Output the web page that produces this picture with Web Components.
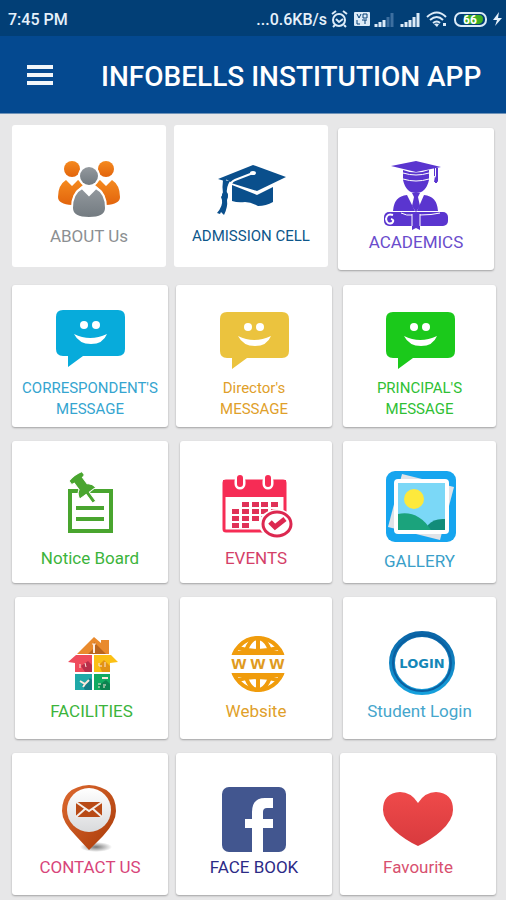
<!DOCTYPE html>
<html lang="en">
<head>
<meta charset="utf-8">
<meta name="viewport" content="width=device-width, initial-scale=1">
<title>Infobells Institution App</title>
<style>
    body {
        margin: 0;
        background: #e7e7e8;
        font-family: Roboto, "Liberation Sans", sans-serif;
    }
</style>
</head>
<body>
<institution-app></institution-app>

<script>
// message bubble, shared by three cards
const bubble = (color, top) => `
    <g transform="translate(0 ${top})">
        <path fill="${color}" d="M13 0h55q7 0 7 7v32q0 7-7 7H33L18 57V46h-5q-7 0-7-7V7q0-7 7-7z"/>
        <circle cx="34" cy="15" r="4" fill="#fff"/>
        <circle cx="46" cy="15" r="4" fill="#fff"/>
        <path fill="#fff" d="M24 24q16 8 33 0q-4 10-16 10T24 24z"/>
    </g>`;

const calendarCells = () => {
    let d = '';
    [26, 33, 40, 47].forEach((y, row) => {
        [16, 26, 36, 45, 55].forEach((x, col) => {
            if (row === 0 && col === 0) return;
            if (row === 3 && col > 1) return;
            d += `M${x} ${y}h7v5h-7z`;
        });
    });
    return d;
};

// every icon is drawn on an 80 x 72 canvas
const ICONS = {
    about: `
        <defs>
            <linearGradient id="o" x2="0" y2="1"><stop stop-color="#f58a1f"/><stop offset="1" stop-color="#e2640c"/></linearGradient>
            <linearGradient id="g" x2="0" y2="1"><stop stop-color="#93999e"/><stop offset="1" stop-color="#727a80"/></linearGradient>
        </defs>
        <g fill="url(#o)">
            <circle cx="23" cy="15" r="8"/>
            <circle cx="57" cy="15" r="8"/>
            <path d="M17 26l6 6 6-6q3 1 5 5l-7 6q-4 7-4 14-14-1-14-8 0-12 8-17z"/>
            <path d="M63 26l-6 6-6-6q-3 1-5 5l7 6q4 7 4 14 14-1 14-8 0-12-8-17z"/>
        </g>
        <circle cx="40" cy="22" r="11" fill="#fff"/>
        <circle cx="40" cy="22" r="9" fill="url(#g)"/>
        <path fill="url(#g)" stroke="#fff" stroke-width="2" d="M33 34l7 7 7-7q10 5 10 20 0 10-17 10T23 54q0-15 10-20z"/>`,
    admission: `
        <g fill="#0a4f8c">
            <path d="M7 25L42 11l33 12-29 14z"/>
            <path d="M21 31l25 10 16-8v15q-7 4-15 4-7-4-13-4-7 1-13-1z"/>
        </g>
        <path fill="none" stroke="#fff" stroke-width="6" d="M18 27q-4 7-3 13"/>
        <path fill="none" stroke="#fff" stroke-width="2" d="M42 19L24 26q-5 2-5 8"/>
        <ellipse cx="42" cy="19" rx="3" ry="2" fill="#fff"/>
        <g fill="#0a4f8c">
            <path d="M12 26l7 1q-4 6-3 13l1 3-1 3q1 7-3 15l-3-3-1 2-3-1q6-7 5-13l-1-3 2-3q-1-8 0-14z"/>
            <circle cx="14" cy="41" r="3"/>
        </g>`,
    academics: `
        <g fill="#5a35cf">
            <path d="M15 6l25-5 25 6-25 5z"/>
            <path d="M27 10q13 5 26 0v10q-3 13-13 13T27 20z"/>
            <path d="M58 8h1v8l3 6h-4l1-6h-1z"/>
            <path d="M17 51q1-15 14-16l8 16zM62 51q-1-15-14-16l-7 16z"/>
            <path d="M36 33h8l-2 4 2 9-4 6-4-6 2-9z"/>
            <rect x="8" y="52" width="64" height="14" rx="5"/>
            <path d="M36 62h8v8l-4-2-4 2z"/>
        </g>
        <g fill="none" stroke="#fff">
            <path d="M27 13q13 4 26 0M27 19q13 4 26 0M25 53q6 3 11 2M44 55q12 0 20-2M36 54v12M44 54v12"/>
            <path stroke-width="2" d="M17 55q-6-2-7 4 1 6 6 4 3-3-1-4"/>
        </g>
        <path stroke="#5a35cf" stroke-width="2" d="M61 8v13M60 18v5"/>`,
    correspondent: bubble('#07abdb', 4),
    director: bubble('#ebc33e', 6),
    principal: bubble('#1bc91b', 6),
    notice: `
        <rect x="20" y="15" width="41" height="40" fill="none" stroke="#49a52f" stroke-width="4"/>
        <path stroke="#49a52f" stroke-width="4" d="M26 32h28M26 43h28"/>
        <path transform="translate(26 1) rotate(-36)" fill="#49a52f" stroke="#fff" d="M-8-1q8-2 16 0v4q-1 1-3 1v8q4 2 5 8H2v11h-4V20h-8q1-6 5-8V4q-2 0-3-1z"/>`,
    events: `
        <rect x="8" y="5" width="61" height="50" rx="2" fill="#fff" stroke="#f62c55" stroke-width="3"/>
        <path fill="#f62c55" d="M7 4h63v17H7z"/>
        <path fill="#e03157" d="${calendarCells()}"/>
        <g stroke-linecap="round">
            <path stroke="#fff" stroke-width="11" d="M24 5v3M52 5v3"/>
            <path stroke="#f62c55" stroke-width="6" d="M24 2v6M52 2v6"/>
        </g>
        <ellipse cx="61" cy="48" rx="18" ry="15" fill="#fff"/>
        <ellipse cx="61" cy="48" rx="14" ry="12" fill="#fff" stroke="#dc2850" stroke-width="3"/>
        <path fill="none" stroke="#dc2850" stroke-width="5" d="M54 46l5 5 10-8"/>`,
    gallery: `
        <rect x="6" y="-8" width="70" height="71" rx="9" fill="#16a5ef"/>
        <path fill="#dfe3e8" d="M22-5L74 8 60 61 8 48z"/>
        <rect x="14" y="0" width="55" height="55" rx="4" fill="#fff"/>
        <path fill="#7bd8f7" d="M18 4h47v47H18z"/>
        <circle cx="34" cy="20" r="10" fill="#fde93c"/>
        <path fill="#128c79" d="M48 46q6-7 17-6v11H48z"/>
        <path fill="#1ba37c" d="M18 35q20-4 33 16H18z"/>`,
    facilities: `
        <path fill="#e98a2d" d="M42 8l7 6v-3h8v14H25z"/>
        <path fill="#b9651f" d="M42 13l12 12H36l5-5z"/>
        <path fill="#ef4b5c" d="M24 26h16v17H23v-9l-7-1z"/>
        <path fill="#fbc015" d="M42 26h17l7 7-8 1v9H42z"/>
        <path fill="#1fa9a8" d="M23 45h17v16H23z"/>
        <path fill="#12ab62" d="M42 45h16v16H42z"/>
        <path fill="#b92f4a" d="M29 37l7-5 4 4v7h-7z"/>
        <path fill="#e39314" d="M47 36l5-5 6 6v6h-8z"/>
        <path fill="#137f86" d="M30 56l8-7 2 2v10h-7z"/>
        <path fill="#0b8350" d="M46 57l8-6 4 4v6h-9z"/>
        <g stroke="#fbe9dc" fill="none">
            <path stroke-width="2" d="M42 15v9M28 52l5 3 4-4M33 55l-2 3M50 49h6"/>
            <path d="M40 15h4M28 35v4M33 34l1 4M47 34v3h3M53 33v5M46 55h3M46 58h2M51 56h3M51 58h2"/>
        </g>`,
    website: `
        <clipPath id="c"><path d="M10 0h64v26H10zM10 44h64v25H10z"/></clipPath>
        <g clip-path="url(#c)" fill="none" stroke="#f09c0c" stroke-width="4">
            <circle cx="42" cy="35" r="26"/>
            <ellipse cx="42" cy="35" rx="14" ry="26"/>
            <path d="M42 8v54M18 24h48M18 46h48M22 19q20 6 40 0M22 51q20-6 40 0"/>
        </g>
        <g fill="#e09a20" font-family="Liberation Sans, sans-serif" font-size="19" font-weight="700" text-anchor="middle">
            <text x="23" y="40">w</text><text x="42" y="40">w</text><text x="61" y="40">w</text>
        </g>`,
    login: `
        <defs><linearGradient id="l" x2="0" y2="1"><stop stop-color="#0a66a8"/><stop offset="1" stop-color="#16a0dc"/></linearGradient></defs>
        <ellipse cx="42" cy="34" rx="30" ry="29" fill="#fff" stroke="url(#l)" stroke-width="6"/>
        <ellipse cx="42" cy="34" rx="29" ry="28" fill="none" stroke="#0b5fa0" stroke-width="2"/>
        <text x="42" y="39" fill="#1487b8" font-family="DejaVu Sans, sans-serif" font-size="13" font-weight="700" text-anchor="middle">LOGIN</text>`,
    contact: `
        <defs>
            <linearGradient id="p" x2="1" y2="1"><stop stop-color="#dd6a30"/><stop offset="1" stop-color="#a93a08"/></linearGradient>
            <linearGradient id="w" x2="0" y2="1"><stop stop-color="#fff"/><stop offset="1" stop-color="#d9dadc"/></linearGradient>
            <radialGradient id="s"><stop stop-color="#777"/><stop offset="1" stop-color="#777" stop-opacity="0"/></radialGradient>
        </defs>
        <ellipse cx="46" cy="62" rx="16" ry="5" fill="url(#s)"/>
        <path fill="url(#p)" d="M39 0q27 2 27 26 0 11-13 25L39 65 26 51Q12 37 12 26 12 2 39 0z"/>
        <circle cx="39" cy="25" r="22" fill="url(#w)"/>
        <path fill="#b84a16" d="M26 17h26v15H26z"/>
        <path fill="none" stroke="#f3eeea" stroke-width="2" d="M26 17l13 9 13-9M26 32l9-8M52 32l-9-8"/>`,
    facebook: `
        <rect x="8" y="2" width="64" height="65" rx="7" fill="#42568f"/>
        <path fill="#fff" d="M38 67V43h-7v-9h7v-7q0-14 13-14h8v10h-6q-4 0-4 4v7h10v9H49v24z"/>`,
    favourite: `
        <defs><linearGradient id="h" x2="0" y2="1"><stop stop-color="#ef4a4a"/><stop offset="1" stop-color="#d83a3e"/></linearGradient></defs>
        <path fill="url(#h)" d="M40 18Q33 7 22 7 5 8 5 25q0 10 12 21 10 9 23 15 13-6 23-15 12-11 12-21Q75 8 58 7 47 7 40 18z"/>`
};

class MenuIcon extends HTMLElement {
    constructor() {
        super();
        this.attachShadow({ mode: 'open' });
    }

    connectedCallback() {
        this.shadowRoot.innerHTML = `
            <style>
                :host { display: block; }
                svg { display: block; width: 80px; height: 72px; overflow: visible; }
            </style>
            <svg viewBox="0 0 80 72" aria-hidden="true">${ICONS[this.getAttribute('name')] || ''}</svg>
        `;
    }
}

class MenuCard extends HTMLElement {
    constructor() {
        super();
        this.attachShadow({ mode: 'open' });
    }

    connectedCallback() {
        this.shadowRoot.innerHTML = `
            <style>
                :host { display: block; min-width: 0; }
                a {
                    display: flex;
                    flex-direction: column;
                    align-items: center;
                    justify-content: flex-end;
                    box-sizing: border-box;
                    height: 142px;
                    padding-bottom: var(--foot, 17px);
                    border-radius: 3px;
                    background: #fff;
                    box-shadow: 0 1px 2px rgba(0, 0, 0, 0.3);
                    color: var(--ink, #333);
                    font-size: 17px;
                    line-height: 21px;
                    text-align: center;
                    text-decoration: none;
                }
                :host([small]) a { font-size: 15px; }
                :host([flat]) a { box-shadow: none; }
            </style>
            <a href="#${this.getAttribute('icon')}">
                <menu-icon name="${this.getAttribute('icon')}"></menu-icon>
                <span><slot></slot></span>
            </a>
        `;
    }
}

class CardRow extends HTMLElement {
    constructor() {
        super();
        this.attachShadow({ mode: 'open' });
    }

    connectedCallback() {
        this.shadowRoot.innerHTML = `
            <style>
                :host {
                    display: grid;
                    grid-template-columns: ${this.getAttribute('columns')};
                }
                ::slotted(:nth-child(1)) { grid-column: 1; }
                ::slotted(:nth-child(2)) { grid-column: 3; }
                ::slotted(:nth-child(3)) { grid-column: 5; }
            </style>
            <slot></slot>
        `;
    }
}

class StatusBar extends HTMLElement {
    constructor() {
        super();
        this.attachShadow({ mode: 'open' });
    }

    connectedCallback() {
        this.shadowRoot.innerHTML = `
            <style>
                :host {
                    display: flex;
                    align-items: center;
                    justify-content: space-between;
                    height: 36px;
                    padding: 2px 4px 0 8px;
                    box-sizing: border-box;
                    background: #023f76;
                    color: #e6f1fb;
                    font-size: 16px;
                    font-weight: 500;
                }
                .right { display: flex; align-items: center; gap: 6px; }
                .speed { display: flex; align-items: center; gap: 4px; }
                svg { display: block; fill: none; stroke: #dcebf8; }
            </style>
            <span>7:45 PM</span>
            <div class="right">
                <div class="speed">
                    <span>...0.6KB/s</span>
                    <svg width="17" height="18" stroke-width="2">
                        <circle cx="8" cy="10" r="6"/><path d="M1 4l4-3M16 4l-4-3M5 9l3 3 4-3M4 15l-2 2M13 15l2 2"/>
                    </svg>
                </div>
                <div class="speed">
                    <svg width="16" height="14">
                        <rect width="16" height="14" rx="1" fill="#dcebf8" stroke="none"/>
                        <path stroke="#023f76" d="M3 2l2 4 2-4M9 2h4v4H9zM3 8v4h3M8 8h5M11 8v4"/>
                    </svg>
                    <svg width="20" height="15" stroke-width="3">
                        <path d="M2 15v-3M6 15v-5M10 15V8"/><path stroke="#3d6f9f" d="M14 15V5M18 15V1"/>
                    </svg>
                </div>
                <svg width="20" height="15" stroke-width="3"><path d="M2 15v-3M6 15v-5M10 15V8M14 15V5M18 15V1"/></svg>
                <svg width="22" height="16" stroke-width="2">
                    <path d="M1 6q10-9 19 0M4 9q7-6 13 0M7 12q4-3 7 0"/>
                    <path fill="#dcebf8" stroke="none" d="M8 13q2-1 5 0l-2 3zM17 12h3v3h-3z"/>
                </svg>
                <svg width="33" height="15" stroke-width="2">
                    <rect x="1" y="1" width="31" height="13" rx="6"/>
                    <path fill="#3faf21" stroke="none" d="M10 3h15q4 0 4 4t-4 5H10z"/>
                    <text x="16" y="12" fill="#fff" stroke="none" font-size="12" font-weight="700" text-anchor="middle">66</text>
                </svg>
                <svg width="9" height="14"><path fill="#e6f1fb" stroke="none" d="M6 0L0 8h4l-2 6 7-8H5z"/></svg>
            </div>
        `;
    }
}

class AppBar extends HTMLElement {
    constructor() {
        super();
        this.attachShadow({ mode: 'open' });
    }

    connectedCallback() {
        this.shadowRoot.innerHTML = `
            <style>
                :host {
                    display: flex;
                    align-items: center;
                    gap: 44px;
                    height: 78px;
                    padding: 0 16px 0 23px;
                    box-sizing: border-box;
                    background: #044990;
                    border-bottom: 1px solid #6f93b8;
                    color: #fff;
                }
                button {
                    display: block;
                    padding: 4px;
                    border: 0;
                    background: none;
                }
                svg { display: block; }
                h1 {
                    margin: 0;
                    padding-top: 4px;
                    font-size: 28px;
                    font-weight: 500;
                    line-height: 32px;
                    white-space: nowrap;
                }
            </style>
            <button type="button" aria-label="Menu">
                <svg width="26" height="20"><path stroke="#f1f6fb" stroke-width="4" d="M0 2h26M0 10h26M0 18h26"/></svg>
            </button>
            <h1><slot></slot></h1>
        `;
    }
}

class InstitutionApp extends HTMLElement {
    constructor() {
        super();
        this.attachShadow({ mode: 'open' });
    }

    connectedCallback() {
        this.shadowRoot.innerHTML = `
            <style>
                :host { display: block; }
                main {
                    display: flex;
                    flex-direction: column;
                    gap: 14px;
                    padding: 11px 10px 5px 12px;
                }
                .first { padding-right: 2px; margin-bottom: 1px; --foot: 20px; }
                .lower { margin-top: 3px; --foot: 17px; }
                .messages { --foot: 7px; }
                .boards { --foot: 14px; }
                .inset { padding-left: 3px; }
            </style>
            <status-bar></status-bar>
            <app-bar>INFOBELLS INSTITUTION APP</app-bar>
            <main>
                <card-row class="first" columns="154fr 8fr 154fr 10fr 156fr">
                    <menu-card icon="about" flat style="--ink: #8c8f92">ABOUT Us</menu-card>
                    <menu-card icon="admission" flat small style="--ink: #0d568a">ADMISSION CELL</menu-card>
                    <menu-card icon="academics" class="lower" style="--ink: #6a4ccc">ACADEMICS</menu-card>
                </card-row>
                <card-row class="messages" columns="156fr 8fr 156fr 11fr 153fr">
                    <menu-card icon="correspondent" small style="--ink: #35a5d0">CORRESPONDENT'S<br>MESSAGE</menu-card>
                    <menu-card icon="director" small style="--ink: #dfa02a">Director's<br>MESSAGE</menu-card>
                    <menu-card icon="principal" small style="--ink: #2fbf35">PRINCIPAL'S<br>MESSAGE</menu-card>
                </card-row>
                <card-row class="boards" columns="156fr 12fr 152fr 11fr 153fr">
                    <menu-card icon="notice" style="--ink: #3cb43c">Notice Board</menu-card>
                    <menu-card icon="events" style="--ink: #d43f68">EVENTS</menu-card>
                    <menu-card icon="gallery" style="--ink: #3a9fc9; --foot: 11px">GALLERY</menu-card>
                </card-row>
                <card-row class="inset" columns="153fr 12fr 152fr 11fr 153fr">
                    <menu-card icon="facilities" style="--ink: #3cb43c">FACILITIES</menu-card>
                    <menu-card icon="website" style="--ink: #dfa02a">Website</menu-card>
                    <menu-card icon="login" style="--ink: #45a6cc">Student Login</menu-card>
                </card-row>
                <card-row columns="156fr 8fr 156fr 8fr 156fr">
                    <menu-card icon="contact" style="--ink: #d8457a">CONTACT US</menu-card>
                    <menu-card icon="facebook" style="--ink: #2c2a86">FACE BOOK</menu-card>
                    <menu-card icon="favourite" style="--ink: #d8506f">Favourite</menu-card>
                </card-row>
            </main>
        `;
    }
}

customElements.define('menu-icon', MenuIcon);
customElements.define('menu-card', MenuCard);
customElements.define('card-row', CardRow);
customElements.define('status-bar', StatusBar);
customElements.define('app-bar', AppBar);
customElements.define('institution-app', InstitutionApp);
</script>
</body>
</html>
